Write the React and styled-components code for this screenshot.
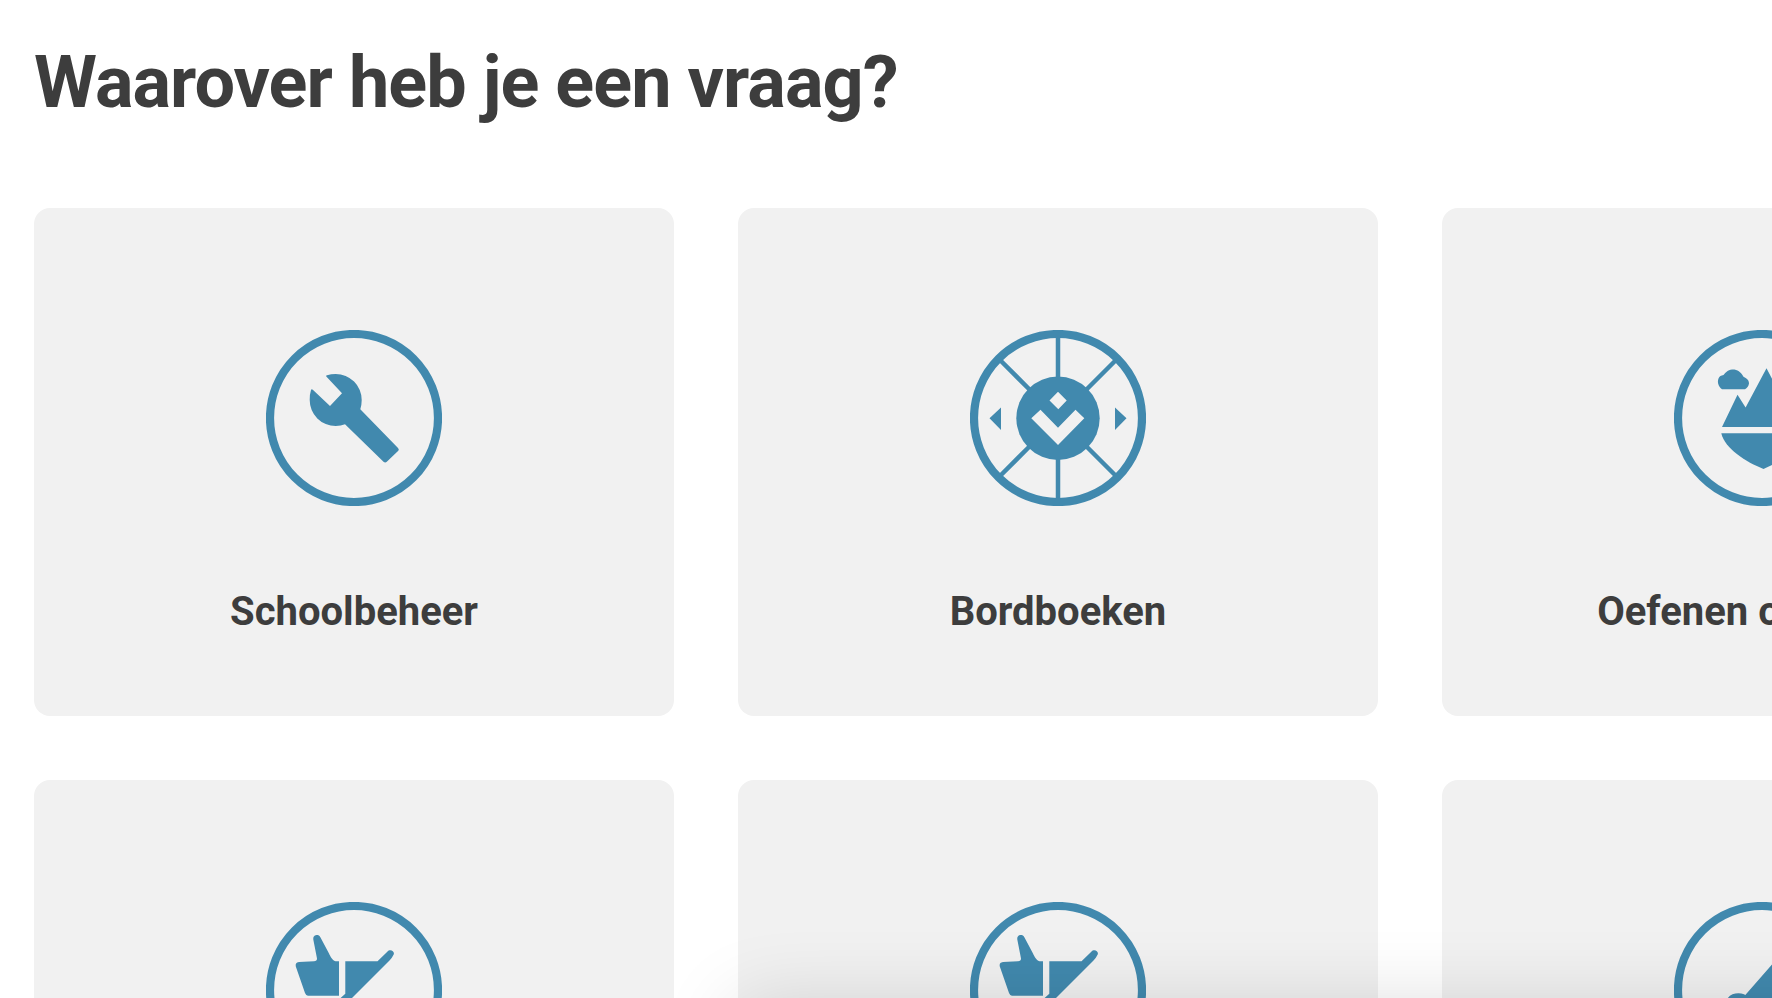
import React from "react";
import styled, { createGlobalStyle } from 'styled-components';

const blue = "#4189ae";
const grey = "#f1f1f1";

const GlobalStyle = createGlobalStyle`
  body {
    margin: 0;
    background: white;
    font-family: Roboto, "Liberation Sans", sans-serif;
    color: #3d3d3d;
  }
`;

const Page = styled.main`
  height: 998px;
  box-sizing: border-box;
  padding: 41px 34px 0;
  overflow: hidden;
  position: relative;
`;

const Title = styled.h1`
  margin: 0 0 83px;
  font-size: 72px;
  line-height: 84px;
  font-weight: 700;
  letter-spacing: -0.950px;
`;

const Grid = styled.div`
  display: grid;
  grid-template-columns: repeat(3, 640px);
  gap: 64px;
`;

const Card = styled.a`
  height: 508px;
  box-sizing: border-box;
  padding-top: 122px;
  border-radius: 16px;
  background: ${grey};
  display: flex;
  flex-direction: column;
  align-items: center;
`;

const Icon = styled.svg`
  width: 176px;
  height: 176px;
  flex: none;
  fill: ${blue};
`;

const Label = styled.h2`
  margin: 82px 0 0;
  font-size: 40px;
  line-height: 48px;
  font-weight: 700;
  white-space: nowrap;
`;

// shadow of the bar that sits just under the fold
const BottomBar = styled.div`
  position: absolute;
  top: 1004px;
  left: 736px;
  width: 1400px;
  height: 200px;
  box-shadow: 0 0 80px rgba(0, 0, 0, 0.14);
`;

const Wrench = () => (
  <path d="M60.300 46.600Q59.500 45.600 61 45.200Q65 44 69.700 44A26 26 0 0 1 95.700 70Q95.700 75 94.300 79.300L132 118Q133.500 119.500 132.300 120.800L120.800 131.800Q119.300 133.200 117.500 131.800L79 94.300Q75 96 69.700 96A26 26 0 0 1 43.700 70Q43.700 64 45 60Q45.600 58.600 46.800 59.800L64 76L76 63.300Z" />
);

const Wheel = () => (
  <>
    <circle cx="88" cy="88.300" r="41.700" />
    <path d="M88 6V48M88 128V170M30.500 30.500L60 60M116 116L145.500 145.500M145.500 30.500L116 60M60 116L30.500 145.500" stroke={blue} strokeWidth="4.500" />
    <path d="M19.500 88.300L31 77.500V100ZM156.500 88.300L145 77.500V100Z" />
    <path d="M88 61.700L96.700 70.500L88.300 79.300L79.500 70.500ZM61.300 88.300L70.500 79.700L88 97.700L105.500 79.700L114.300 88.300L88 115Z" fill={grey} />
  </>
);

const Island = () => (
  <>
    <path d="M48 59.300C44.500 56.500 43 52.500 44.500 48.500C45.500 46 47 45.500 49.500 45C52 42.500 53.500 40 58 39.600C64 39.500 66 41.500 69.500 46.700C73.500 48.500 75 50.500 75 53.500C74.500 56.500 73 58 71 59.300Z" />
    <path d="M48 97L63.500 64.700L71.600 77.500L92.500 38.300L104 60L109 53L132 97Z" />
    <path d="M47.300 103.300H130C127 119 106 132 89.500 139C72 132 51 119 47.300 103.300Z" />
  </>
);

const Thumb = () => (
  <>
    <path d="M73 59.200H69.500C66 58 64.500 54.500 63 51.500L54.500 35.500C53.500 33.500 52.500 33 50.500 33C48 33.200 47 35 47.300 37.500L51 56.500C51 58.500 50 59 48 59.200L33 60C30 60.500 29.300 62 29.800 64.500L39 91Q40 93.700 42 93.700H73Z" />
    <path d="M79.300 59.200H111.500L121.300 49.700C124 46.500 129 49 127.700 52.500Q126 56 123.500 58.500L80 102H68L79.300 91.700Z" />
  </>
);

const Slope = () => (
  <path d="M53.500 96.500C57 91 65 90.300 70 92.300L71.300 93L98 62.500L110 50V110H50Z" />
);

const cards = [
  { name: "Schoolbeheer", Drawing: Wrench },
  { name: "Bordboeken", Drawing: Wheel },
  { name: "Oefenen op Bingel", Drawing: Island },
  { name: "", Drawing: Thumb },
  { name: "", Drawing: Thumb },
  { name: "", Drawing: Slope },
];

export default function App() {
  return (
    <Page>
      <GlobalStyle />
      <Title>Waarover heb je een vraag?</Title>
      <Grid>
        {cards.map(({ name, Drawing }, i) => (
          <Card key={i}>
            <Icon viewBox="0 0 176 176">
              <circle cx="88" cy="88" r="84" fill="none" stroke={blue} strokeWidth="8.200" />
              <Drawing />
            </Icon>
            {name && <Label>{name}</Label>}
          </Card>
        ))}
      </Grid>
      <BottomBar />
    </Page>
  );
}
